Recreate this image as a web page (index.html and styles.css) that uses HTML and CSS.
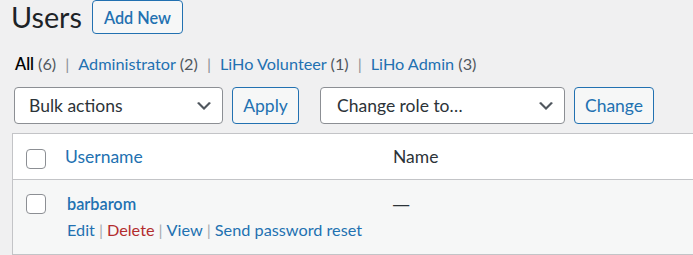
FILE: index.html
```html
<!doctype html>
<html>
<head>
  <meta charset="UTF-8">
  <meta name="viewport" content="width=device-width, initial-scale=1.0">
  <link rel="stylesheet" href="styles.css">
</head>
<body>
  <div class="wrap">
    <div class="title-row">
      <h1>Users</h1>
      <a class="page-title-action" href="#">Add New</a>
    </div>

    <ul class="subsubsub">
      <li class="current">All <span class="count">(6)</span></li>
      <li><span class="sep">|</span><a href="#">Administrator</a> <span class="count">(2)</span></li>
      <li><span class="sep">|</span><a href="#">LiHo Volunteer</a> <span class="count">(1)</span></li>
      <li><span class="sep">|</span><a href="#">LiHo Admin</a> <span class="count">(3)</span></li>
    </ul>

    <div class="tablenav">
      <div class="select select-bulk">
        <span>Bulk actions</span>
        <svg width="20" height="20" viewBox="0 0 20 20"><path d="M5 6l5 5 5-5 2 1-7 7-7-7 2-1z" fill="#50575e"/></svg>
      </div>
      <a class="button button-apply" href="#">Apply</a>
      <div class="select select-role">
        <span>Change role to&hellip;</span>
        <svg width="20" height="20" viewBox="0 0 20 20"><path d="M5 6l5 5 5-5 2 1-7 7-7-7 2-1z" fill="#50575e"/></svg>
      </div>
      <a class="button button-change" href="#">Change</a>
    </div>

    <table class="users">
      <thead>
        <tr>
          <th class="check-column"><span class="checkbox"></span></th>
          <th class="col-username"><a href="#">Username</a></th>
          <th class="col-name">Name</th>
          <th class="col-rest"></th>
        </tr>
      </thead>
      <tbody>
        <tr>
          <td class="check-column"><span class="checkbox"></span></td>
          <td class="col-username">
            <strong><a href="#">barbarom</a></strong>
            <div class="row-actions">
              <a href="#">Edit</a><span class="sep">|</span><a class="delete" href="#">Delete</a><span class="sep">|</span><a href="#">View</a><span class="sep">|</span><a href="#">Send password reset</a>
            </div>
          </td>
          <td class="col-name"><span class="empty">&mdash;</span></td>
          <td class="col-rest"></td>
        </tr>
      </tbody>
    </table>
  </div>
</body>
</html>
```

FILE: styles.css
```css
:root {
  --link: #2271b1;
  --border: #c3c4c7;
  --input-border: #8c8f94;
  --text: #2c3338;
}

* {
  box-sizing: border-box;
}

html, body {
  margin: 0;
  background-color: #f0f0f1;
  color: var(--text);
  font-family: "Segoe UI", Lato, "Liberation Sans", sans-serif;
  font-size: 16.25px;
  overflow: hidden;
}

a {
  color: var(--link);
  text-decoration: none;
}

.wrap {
  padding-left: 12px;
  width: 900px;
}

.title-row {
  display: flex;
  align-items: center;
  height: 34px;
}

.title-row h1 {
  margin: 0 10px 0 -1px;
  font-size: 28.75px;
  font-weight: 400;
  line-height: 34px;
  color: #1d2327;
}

.page-title-action {
  display: inline-flex;
  align-items: center;
  height: 34px;
  padding: 0 11px;
  border: 1px solid var(--link);
  border-radius: 4px;
  background-color: #f6f7f7;
  font-weight: 600;
  font-size: 16.25px;
}

.subsubsub {
  list-style: none;
  margin: 20px 0 0 3px;
  padding: 0;
  display: flex;
  line-height: 20px;
  color: #646970;
}

.subsubsub li {
  white-space: pre;
}

.subsubsub .current {
  font-weight: 600;
  color: #000;
}

.subsubsub .count {
  font-weight: 400;
  color: #50575e;
}

.subsubsub .sep {
  color: #8c8f94;
  padding: 0 9px;
}

.tablenav {
  display: flex;
  margin: 13px 0 0 2px;
  height: 37px;
}

.select {
  display: flex;
  align-items: center;
  justify-content: space-between;
  height: 37px;
  padding: 0 8px 0 14px;
  border: 1px solid var(--input-border);
  border-radius: 4px;
  background-color: #fff;
  font-size: 17.5px;
  color: var(--text);
}

.select-bulk {
  width: 209px;
}

.select-role {
  width: 245px;
  margin-left: 21px;
  padding-left: 16px;
}

.button {
  display: inline-flex;
  align-items: center;
  justify-content: center;
  height: 37px;
  margin-left: 9px;
  border: 1px solid var(--link);
  border-radius: 4px;
  background-color: #f6f7f7;
  font-size: 17.5px;
}

.button-apply {
  width: 67px;
}

.button-change {
  width: 80px;
  margin-left: 9px;
}

.users {
  margin-top: 9px;
  width: 860px;
  table-layout: fixed;
  border-collapse: separate;
  border-spacing: 0;
  border: 1px solid var(--border);
  background-color: #fff;
}

.users th {
  text-align: left;
  font-weight: 400;
  font-size: 17.5px;
  line-height: 24px;
  padding: 11px 10px 10px;
  border-bottom: 1px solid var(--border);
  color: var(--text);
}

.users td {
  vertical-align: top;
  padding: 14px 10px 14px;
  line-height: 20px;
  background-color: #f6f7f7;
  color: #50575e;
}

.users .check-column {
  width: 42px;
  padding-left: 13px;
  padding-right: 0;
}

.users .col-username {
  width: 328px;
}

.users td.col-username {
  padding-left: 12px;
}

.users .col-name {
  width: 200px;
  color: var(--text);
}

.empty {
  font-family: "Liberation Sans", sans-serif;
}

.checkbox {
  display: block;
  width: 20px;
  height: 20px;
  border: 1px solid var(--input-border);
  border-radius: 4px;
  background-color: #fff;
}

.users th .checkbox {
  margin-top: 3px;
}

.users strong a {
  font-weight: 600;
}

.row-actions {
  margin-top: 6px;
}

.row-actions .sep {
  color: #a7aaad;
  padding: 0 4px;
}

.row-actions .delete {
  color: #b32d2e;
}
```
